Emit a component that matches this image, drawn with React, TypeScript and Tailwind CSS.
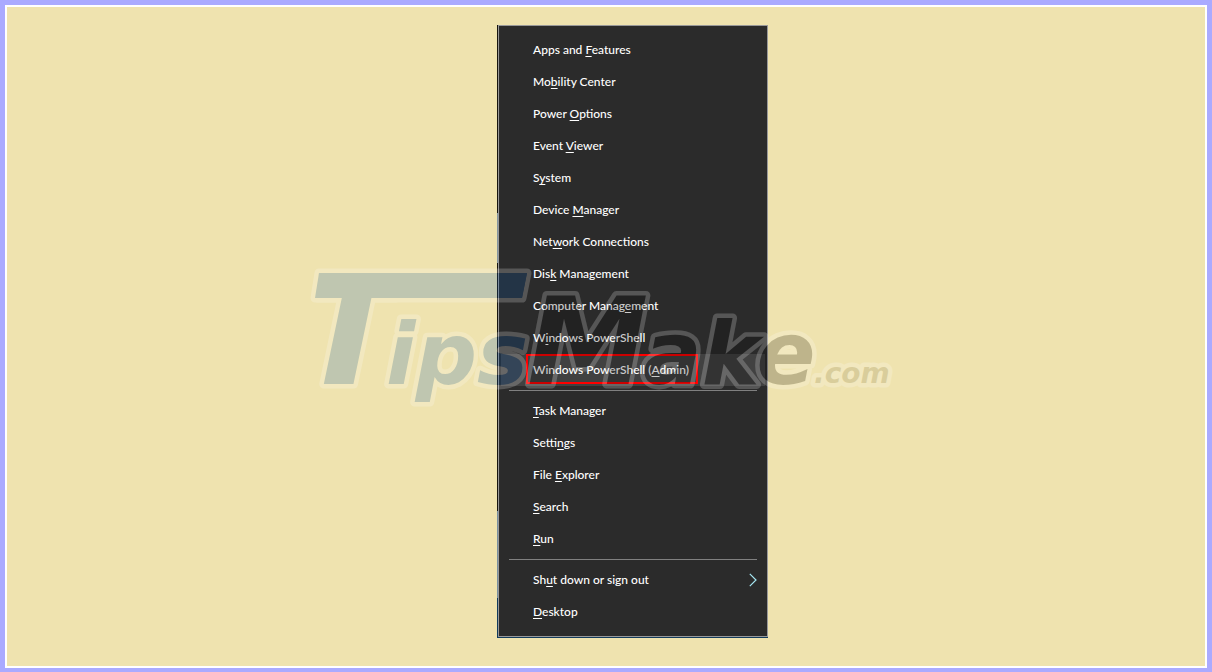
import React from "react";

type Item = { label: string; key: number; submenu?: boolean; active?: boolean };

const groups: Item[][] = [
  [
    { label: "Apps and Features", key: 9 },
    { label: "Mobility Center", key: 2 },
    { label: "Power Options", key: 6 },
    { label: "Event Viewer", key: 6 },
    { label: "System", key: 1 },
    { label: "Device Manager", key: 7 },
    { label: "Network Connections", key: 3 },
    { label: "Disk Management", key: 3 },
    { label: "Computer Management", key: 14 },
    { label: "Windows PowerShell", key: 1 },
    { label: "Windows PowerShell (Admin)", key: 20, active: true },
  ],
  [
    { label: "Task Manager", key: 0 },
    { label: "Settings", key: 5 },
    { label: "File Explorer", key: 5 },
    { label: "Search", key: 0 },
    { label: "Run", key: 0 },
  ],
  [
    { label: "Shut down or sign out", key: 2, submenu: true },
    { label: "Desktop", key: 0 },
  ],
];

function MenuItem({ item }: { item: Item }) {
  const { label, key, submenu, active } = item;
  return (
    <button
      type="button"
      role="menuitem"
      aria-haspopup={submenu ? "menu" : undefined}
      className={
        "relative flex h-8 w-full items-center justify-between pr-2 pl-8 text-left text-xs font-medium whitespace-nowrap text-white " +
        (active ? "bg-[#414141]" : "hover:bg-[#414141]")
      }
    >
      <span>
        {label.slice(0, key)}
        <span className="underline decoration-1 underline-offset-2 [text-decoration-skip-ink:none]">{label[key]}</span>
        {label.slice(key + 1)}
      </span>
      {submenu && (
        <svg width="8" height="14" viewBox="0 0 8 14" fill="none" stroke="#a5e6f2" strokeWidth="1.2" aria-hidden="true">
          <path d="M0.8 0.8 7 7 0.8 13.2" />
        </svg>
      )}
      {active && <span className="absolute top-0 left-[25px] h-[30px] w-[172px] border-2 border-[#ff0000]" />}
    </button>
  );
}

const words = [
  { text: "ips", x: 386, y: 384, size: 86, fill: "#0458b4" },
  { text: "M", x: 527, y: 384, size: 122, fill: "#000000" },
  { text: "ake", x: 643, y: 384, size: 87, fill: "#000000" },
  { text: ".com", x: 814, y: 383, size: 28, fill: "#857a50" },
];

const bar = "M319 273H527L522 298H315Z";

function Watermark() {
  return (
    <svg
      className="pointer-events-none absolute top-[230px] left-[-197px] h-[160px] w-[610px] opacity-20"
      viewBox="300 255 610 160"
      fontFamily="'DejaVu Sans', sans-serif"
      fontWeight="700"
      fontStyle="italic"
      role="img"
      aria-label="TipsMake.com"
    >
      <g stroke="#ffffff" strokeWidth="9" strokeLinejoin="round" paintOrder="stroke">
        <path d={bar} fill="#0458b4" />
        <text x="306" y="384" fontSize="155" fontFamily="'Noto Sans', sans-serif" fontWeight="900" fill="#0458b4">
          T
        </text>
        {words.map((w) => (
          <text key={w.text} x={w.x} y={w.y} fontSize={w.size} fill={w.fill}>
            {w.text}
          </text>
        ))}
      </g>
      <path d={bar} fill="#0458b4" />
    </svg>
  );
}

export default function App() {
  return (
    <div className="min-h-screen border-[5px] border-[#aaaaff] bg-white p-0.5 font-[Lato,'Open_Sans',sans-serif]">
      <main className="flex min-h-[calc(100vh-14px)] items-start justify-center overflow-hidden bg-[#efe3af] pt-[18px] pb-7 pl-[53px]">
        <div className="relative bg-[linear-gradient(to_bottom,#17150f_188px,#8496a0_188px,#8496a0_238px,#17150f_238px,#17150f_486px,#7890a0_486px,#7890a0_573px,#123b5c_573px)] pb-px pl-px">
          <div role="menu" className="w-[270px] border border-[#999999] bg-[#2b2b2b] px-0.5 py-2">
            {groups.map((group, i) => (
              <React.Fragment key={i}>
                {i > 0 && <hr className="mx-2 my-1 border-t border-[#808080]" />}
                {group.map((item) => (
                  <MenuItem key={item.label} item={item} />
                ))}
              </React.Fragment>
            ))}
          </div>
          <Watermark />
        </div>
      </main>
    </div>
  );
}
